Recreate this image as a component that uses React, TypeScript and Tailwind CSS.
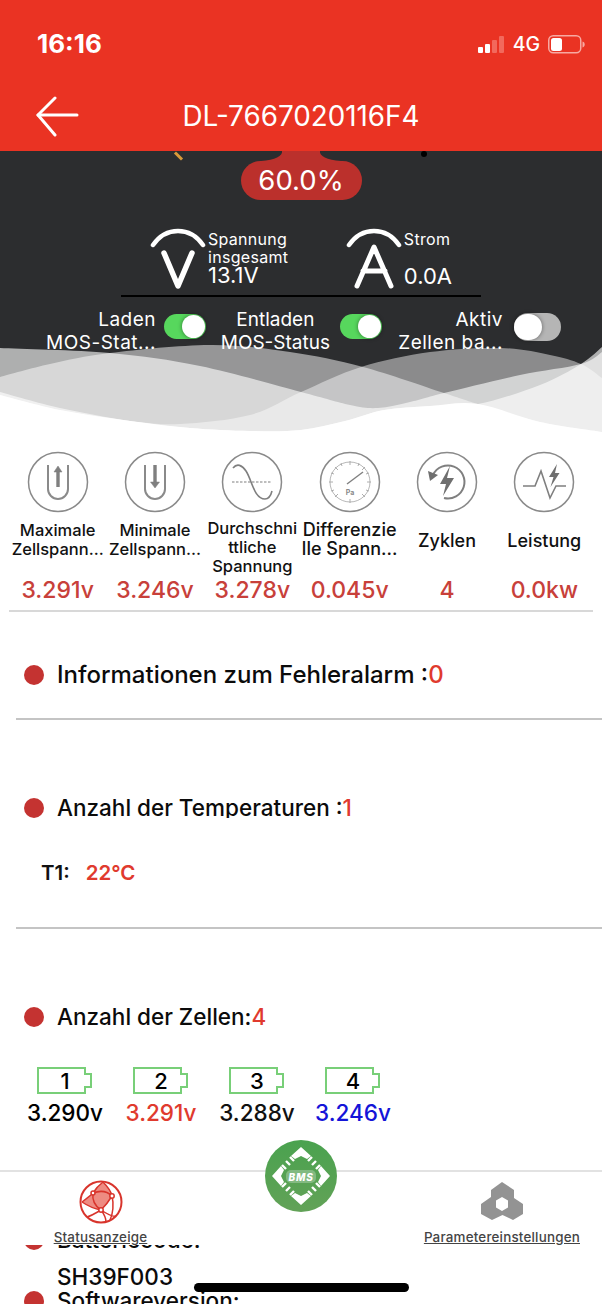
import React from "react";

const font = { fontFamily: "Inter, 'Liberation Sans', sans-serif" };

type P = [number, number];

function spline(pts: P[]): string {
  const all: P[] = [pts[0], ...pts, pts[pts.length - 1]];
  let d = `M${pts[0][0]} ${pts[0][1]}`;
  for (let i = 1; i < all.length - 2; i++) {
    const [p0, p1, p2, p3] = [all[i - 1], all[i], all[i + 1], all[i + 2]];
    const c1x = p1[0] + (p2[0] - p0[0]) / 6;
    const c1y = p1[1] + (p2[1] - p0[1]) / 6;
    const c2x = p2[0] - (p3[0] - p1[0]) / 6;
    const c2y = p2[1] - (p3[1] - p1[1]) / 6;
    d += `C${c1x.toFixed(1)} ${c1y.toFixed(1)} ${c2x.toFixed(1)} ${c2y.toFixed(1)} ${p2[0]} ${p2[1]}`;
  }
  return d + "V445H0Z";
}

const c1: P[] = [[0, 348], [110, 353], [200, 366], [301, 392], [350, 405], [378, 408], [410, 402], [444, 393], [520, 375], [581, 364], [602, 352]];
const c2: P[] = [[0, 377], [50, 364], [110, 353], [210, 345], [290, 352], [363, 367], [444, 393], [478, 404], [540, 422], [602, 432]];
const c3: P[] = [[0, 395], [60, 410], [130, 421], [180, 424], [250, 415], [301, 392], [361, 367], [430, 352], [501, 348], [550, 355], [581, 364], [602, 378]];
const c4: P[] = [[0, 392], [60, 408], [130, 421], [190, 428], [250, 431], [301, 430], [345, 421], [384, 410], [430, 406], [478, 404], [540, 385], [581, 364], [602, 347]];
const floor: P[] = [[0, 395], [60, 410], [130, 421], [190, 428], [250, 431], [301, 430], [345, 421], [384, 410], [430, 406], [478, 404], [540, 422], [602, 432]];

function Waves() {
  return (
    <svg className="absolute left-0 top-[189px]" width="602" height="100" viewBox="0 340 602 100">
      <path d={spline(c1)} fill="#fff" fillOpacity="0.62" />
      <path d={spline(c2)} fill="#fff" fillOpacity="0.5" />
      <path d={spline(c3)} fill="#fff" fillOpacity="0.45" />
      <path d={spline(c4)} fill="#fff" fillOpacity="0.62" />
      <path d={spline(floor)} fill="#fff" />
    </svg>
  );
}

function Toggle({ on, big }: { on: boolean; big?: boolean }) {
  return (
    <div className={`relative shrink-0 rounded-full ${on ? "bg-[#57d75d]" : "bg-[#b5b5b5]"} ${big ? "h-[28px] w-[47px]" : "h-[25px] w-[42px]"}`}>
      <div className={`absolute top-[1px] rounded-full bg-white shadow-[0_0_4px_rgba(0,0,0,0.45)] ${big ? "left-0 h-[26px] w-[28px]" : "right-[1px] h-[23px] w-[23px]"}`} />
    </div>
  );
}

function Ring({ children }: { children: React.ReactNode }) {
  return (
    <svg width="62" height="62" viewBox="0 0 62 62" fill="none" stroke="#7f7f7f" strokeWidth="1.6">
      <circle cx="31" cy="31" r="29.5" stroke="#8a8a8a" strokeWidth="1.5" />
      {children}
    </svg>
  );
}

const icons = [
  <Ring key="a">
    <path d="M21 14v24a10 10 0 0 0 20 0V14" strokeWidth="2" stroke="#8a8a8a" />
    <path d="M31 36V19" strokeWidth="3.4" />
    <path d="M27 21l4-6 4 6z" fill="#7f7f7f" strokeWidth="0.5" />
  </Ring>,
  <Ring key="b">
    <path d="M21 14v24a10 10 0 0 0 20 0V14" strokeWidth="2" stroke="#8a8a8a" />
    <path d="M31 14v18" strokeWidth="3.4" />
    <path d="M26.5 31l4.5 6 4.5-6z" fill="#7f7f7f" strokeWidth="0.5" />
  </Ring>,
  <Ring key="c">
    <path d="M12 17c4-5 9-3 13 3 6 9 8 28 19 28 4 0 6-4 7-8" />
    <path d="M11 31h40" strokeDasharray="2.5 1.5" strokeWidth="1.2" />
  </Ring>,
  <Ring key="d">
    <circle cx="31" cy="31" r="20" strokeWidth="0.8" stroke="#a5a5a5" />
    <path d="M31 10v4M31 48v4M10 31h4M48 31h4M16 16l3 3M46 16l-3 3M16 46l3-3M46 46l-3-3M22 12l1 3M40 12l-1 3M12 22l3 1M50 22l-3 1M12 40l3-1M50 40l-3-1" strokeWidth="0.9" stroke="#a5a5a5" />
    <path d="M28 33L44 21" strokeWidth="1.4" />
    <text x="31" y="44" fontSize="7" fontWeight="700" fill="#8a8a8a" stroke="none" textAnchor="middle" style={font}>Pa</text>
  </Ring>,
  <Ring key="e">
    <path d="M17 24a16.5 16.5 0 1 1 11 23" strokeWidth="2" />
    <path d="M12 20l2 10 8-6z" fill="#6f6f6f" stroke="none" />
    <path d="M34 15L24 33h6l-3 12 11-18h-7z" fill="#6f6f6f" stroke="none" />
  </Ring>,
  <Ring key="f">
    <path d="M10 35h12l6-15 9 27 6-12h10" />
    <path d="M44 13l-8 13h4.5l-3 10 9-14h-4.500z" fill="#6f6f6f" stroke="none" />
  </Ring>,
];

const stats = [
  { l: ["Maximale", "Zellspann..."], v: "3.291v", p: "pt-[2px] text-[16.5px]" },
  { l: ["Minimale", "Zellspann..."], v: "3.246v", p: "pt-[2px] text-[16.5px]" },
  { l: ["Durchschni", "ttliche", "Spannung"], v: "3.278v", p: "pt-0 text-[16.5px]" },
  { l: ["Differenzie", "lle Spann..."], v: "0.045v", p: "pt-[1px] text-[18px]" },
  { l: ["Zyklen"], v: "4", p: "pt-[12px] text-[18px]" },
  { l: ["Leistung"], v: "0.0kw", p: "pt-[12px] text-[18px]" },
];

const cells = [
  { n: "1", v: "3.290v", c: "text-black" },
  { n: "2", v: "3.291v", c: "text-[#e03a2e]" },
  { n: "3", v: "3.288v", c: "text-[#111]" },
  { n: "4", v: "3.246v", c: "text-[#1414d8]" },
];

function Dot() {
  return <div className="h-[20px] w-[20px] shrink-0 rounded-full bg-[#c43331]" />;
}

const ticks = "M21 29l-4-4M25 25l-4-4M29 21l-4-4M43 21l4-4M47 25l4-4M51 29l4-4M21 43l-4 4M25 47l-4 4M29 51l-4 4M43 51l4 4M47 47l4 4M51 43l4 4";

export default function App() {
  return (
    <div className="relative flex h-[1304px] w-[602px] flex-col overflow-hidden bg-white" style={font}>
      <header className="h-[151px] shrink-0 bg-[#ea3323] text-white">
        <div className="flex items-center justify-between pl-[37px] pr-[17px] pt-[29px]">
          <span className="text-[26px] font-bold leading-[30px]">16:16</span>
          <div className="flex items-center">
            <svg width="27" height="17" viewBox="0 0 27 17" className="mr-[8px]">
              <rect x="0" y="11" width="5" height="6" rx="1" fill="#fff" />
              <rect x="7" y="8" width="5" height="9" rx="1" fill="#fff" />
              <rect x="14" y="4" width="5" height="13" rx="1" fill="#f2695c" />
              <rect x="21" y="0" width="5" height="17" rx="1" fill="#f2695c" />
            </svg>
            <span className="text-[19.5px] font-medium leading-[24px]">4G</span>
            <svg width="37" height="19" viewBox="0 0 37 19" className="ml-[8px]">
              <rect x="0.75" y="0.75" width="32" height="17" rx="4.5" fill="none" stroke="#f7a9a2" strokeWidth="1.5" />
              <rect x="3" y="3" width="11" height="13" rx="2.500" fill="#fff" />
              <path d="M34.5 6.5c1.6.4 2.2 1.6 2.2 3s-.6 2.600-2.200 3z" fill="#f7a9a2" />
            </svg>
          </div>
        </div>
        <div className="relative mt-[40px] flex items-center justify-center">
          <svg width="44" height="42" viewBox="0 0 44 42" fill="none" stroke="#fff" strokeWidth="3" strokeLinecap="round" strokeLinejoin="round" className="absolute left-[35px] top-[-3px]">
            <path d="M42 19H3" />
            <path d="M20 2L3 19l17 20" />
          </svg>
          <span className="text-[27.8px] font-normal leading-[34px]">DL-7667020116F4</span>
        </div>
      </header>

      <section className="relative h-[289px] shrink-0 bg-[#2c2d2f] text-white">
        <Waves />
        <div className="absolute left-[177px] top-0 h-[10px] w-[3px] -rotate-45 bg-[#d99a3a]" />
        <div className="absolute left-[421px] top-0 h-[6px] w-[6px] rounded-full bg-black" />
        <div className="relative flex flex-col items-center">
          <svg width="80" height="10" viewBox="0 0 80 10" className="block">
            <path d="M21 0C22 5 14 9 0 10H80C66 9 58 5 59 0Z" fill="#bb302c" />
          </svg>
          <div className="flex h-[39px] w-[121px] items-center justify-center rounded-[20px] bg-[#bb302c] text-[27.5px] leading-none">60.0%</div>
          <div className="mt-[26px] flex h-[69px] w-[302px]">
            <div className="flex w-[196px]">
              <svg width="58" height="66" viewBox="0 0 58 66" fill="none" stroke="#fff" strokeLinecap="round" strokeLinejoin="round">
                <path d="M3 19C10 9 18 5 28 5s18 4 25 14" strokeWidth="4.5" />
                <path d="M14 27l14 33 14-33" strokeWidth="5.500" />
              </svg>
              <div className="pt-[4px] text-[16px] leading-[18px] tracking-[0.3px]">
                <div>Spannung</div>
                <div>insgesamt</div>
                <div className="text-[22px] tracking-normal">13.1V</div>
              </div>
            </div>
            <div className="flex">
              <svg width="58" height="66" viewBox="0 0 58 66" fill="none" stroke="#fff" strokeLinecap="round" strokeLinejoin="round">
                <path d="M3 19C10 9 18 5 28 5s18 4 25 14" strokeWidth="4.5" />
                <path d="M11 60l17-39 17 39M17 45h22" strokeWidth="5" />
              </svg>
              <div className="pt-[4px] text-[16px] leading-[18px] tracking-[0.3px]">
                <div>Strom</div>
                <div className="mt-[17px] text-[22px] leading-[22px] tracking-normal">0.0A</div>
              </div>
            </div>
          </div>
          <div className="h-[2px] w-[360px] bg-black" />
          <div className="relative mt-[12px] flex w-[602px] items-start text-[19px] leading-[22.5px]">
            <div className="flex w-[206px] items-center justify-end">
              <div className="pr-[8px] text-right tracking-[0.5px]"><div>Laden</div><div>MOS-Stat...</div></div>
              <div className="mb-[10px]"><Toggle on /></div>
            </div>
            <div className="flex w-[176px] items-center justify-end">
              <div className="pr-[10px] text-center"><div>Entladen</div><div>MOS-Status</div></div>
              <div className="mb-[10px]"><Toggle on /></div>
            </div>
            <div className="flex w-[179px] items-center justify-end">
              <div className="pr-[11px] text-right tracking-[0.5px]"><div>Aktiv</div><div>Zellen ba...</div></div>
              <div className="mb-[10px]"><Toggle on={false} big /></div>
            </div>
          </div>
        </div>
      </section>

      <section className="mx-[9px] grid h-[172px] shrink-0 grid-cols-6 border-b-2 border-[#d8d8d8] pt-[11px]">
        {stats.map((s, i) => (
          <div key={i} className="flex flex-col items-center">
            {icons[i]}
            <div className={`mt-[6px] flex h-[58px] flex-col whitespace-nowrap text-center font-medium leading-[19px] text-[#111] ${s.p}`}>
              {s.l.map((t) => <div key={t}>{t}</div>)}
            </div>
            <div className="text-[23px] font-medium leading-[26px] text-[#c8403a]">{s.v}</div>
          </div>
        ))}
      </section>

      <section className="ml-[16px] h-[108px] shrink-0 border-b-2 border-[#c4c4c4]">
        <div className="flex items-center pl-[8px] pt-[47px]">
          <Dot />
          <span className="ml-[13px] text-[24px] font-[550] leading-[32px] text-[#0b0b0b]">Informationen zum Fehleralarm :<span className="text-[#e03a2e]">0</span></span>
        </div>
      </section>

      <section className="ml-[16px] h-[209px] shrink-0 border-b-2 border-[#c4c4c4]">
        <div className="mt-[60px] flex h-[38px] items-center overflow-hidden pl-[8px] pt-[18px]">
          <Dot />
          <span className="ml-[13px] text-[22.5px] font-[550] leading-[30px] text-[#0b0b0b]">Anzahl der Temperaturen :<span className="text-[#e03a2e]">1</span></span>
        </div>
        <div className="mt-[41px] flex pl-[25px] text-[20.5px] font-semibold leading-[28px]">
          <span className="text-[#111]">T1:</span>
          <span className="ml-[16px] text-[#e03a2e]">22°C</span>
        </div>
      </section>

      <section className="h-[241px] shrink-0 pl-[24px]">
        <div className="flex items-center pt-[73px]">
          <Dot />
          <span className="ml-[13px] text-[22.5px] font-[550] leading-[30px] text-[#0b0b0b]">Anzahl der Zellen:<span className="text-[#e03a2e]">4</span></span>
        </div>
        <div className="ml-[-7px] mt-[35px] flex">
          {cells.map((c) => (
            <div key={c.n} className="flex w-[96px] flex-col items-center">
              <div className="relative flex h-[27px] w-[56px] items-center justify-center text-[22px] font-medium leading-none text-black">
                <svg width="56" height="27" viewBox="0 0 56 27" fill="none" stroke="#78cf78" strokeWidth="2" className="absolute inset-0">
                  <path d="M1 1h47v6h6v13h-6v6H1z" />
                </svg>
                <span className="relative">{c.n}</span>
              </div>
              <div className={`mt-[6px] whitespace-nowrap text-[22.5px] font-medium leading-[26px] ${c.c}`}>{c.v}</div>
            </div>
          ))}
        </div>
      </section>

      <nav className="relative h-[75px] shrink-0 border-t-2 border-[#e2e2e2] bg-white">
        <div className="absolute left-[53px] top-[8px] flex w-[95px] flex-col items-center">
          <svg width="44" height="44" viewBox="0 0 44 44" fill="none" stroke="#d8342c" strokeWidth="1.5">
            <path d="M14 13C17 8 20 5 24 2 29 7 32 11 33 16 30 21 26 26 22 30 16 29 9 26 3 22 7 19 11 16 14 13Z" fill="#ee8b82" stroke="none" />
            <circle cx="22" cy="22" r="20.5" strokeWidth="2" />
            <path d="M3 22C7 19 11 16 14 13 17 8 20 5 24 2M24 2C29 7 32 11 33 16 35 24 34 34 31 40M14 13C22 10 28 11 33 16M14 13C13 20 16 26 22 30 28 34 34 37 37 36M3 22C9 26 16 29 22 30M33 16C30 21 26 26 22 30 17 33 12 36 8 37M22 30C25 34 27 38 27 42" />
            <circle cx="14" cy="13" r="2" fill="#fff" />
            <circle cx="33" cy="16" r="2.200" fill="#fff" />
            <circle cx="22" cy="30" r="2.200" fill="#fff" />
          </svg>
          <span className="mt-[5px] whitespace-nowrap text-[13.4px] font-medium leading-[16px] tracking-[0.2px] text-[#444] underline">Statusanzeige</span>
        </div>
        <div className="absolute left-[265px] top-[-32px]">
          <svg width="72" height="72" viewBox="0 0 72 72">
            <defs>
              <linearGradient id="g" x1="0" y1="0" x2="0" y2="1">
                <stop offset="0" stopColor="#4aa24f" />
                <stop offset="1" stopColor="#62a257" />
              </linearGradient>
            </defs>
            <circle cx="36" cy="36" r="36" fill="url(#g)" />
            <path d="M36 7l10 9-4 3-6-3-6 3-4-3zM36 65l10-9-4-3-6 3-6-3-4 3zM7 36l9-10 3 4-3 6 3 6-3 4zM65 36l-9-10-3 4 3 6-3 6 3 4z" fill="#fff" />
            <path d={ticks} stroke="#fff" strokeWidth="2.400" />
            <rect x="21" y="30" width="30" height="13" rx="5" fill="#a8cda8" fillOpacity="0.55" />
            <text x="36" y="40.500" textAnchor="middle" fontSize="10" fontWeight="800" fontStyle="italic" fill="#fff" letterSpacing="0.8" style={font}>BMS</text>
          </svg>
        </div>
        <div className="absolute right-[22px] top-[10px] flex flex-col items-center">
          <svg width="42" height="38" viewBox="0 0 42 38" fill="#939393">
            <path d="M21 0L33 8V16L42 22V32L32 38 21.500 33 11 38 0 32V22L10 15V8ZM21 15L15 18.500V25.500L21 29 27 25.500V18.500Z" fillRule="evenodd" />
          </svg>
          <span className="mt-[9px] whitespace-nowrap text-[13.4px] font-medium leading-[16px] tracking-[0.2px] text-[#444] underline">Parametereinstellungen</span>
        </div>
      </nav>

      <div className="h-[59px] overflow-hidden pl-[24px]">
        <div className="mt-[-19px] flex items-center">
          <Dot />
          <span className="ml-[13px] text-[22.5px] font-medium leading-[28px] text-[#0b0b0b]">Batteriecode:</span>
        </div>
        <div className="pl-[33px] pt-[9px] text-[22.5px] font-medium leading-[28px] text-[#0b0b0b]">SH39F003</div>
        <div className="mt-[-2px] flex items-center">
          <Dot />
          <span className="ml-[13px] text-[22.5px] font-medium leading-[24px] text-[#0b0b0b]">Softwareversion:</span>
        </div>
      </div>

      <div className="absolute bottom-[12px] left-[194px] h-[9px] w-[215px] rounded-full bg-black" />
    </div>
  );
}
